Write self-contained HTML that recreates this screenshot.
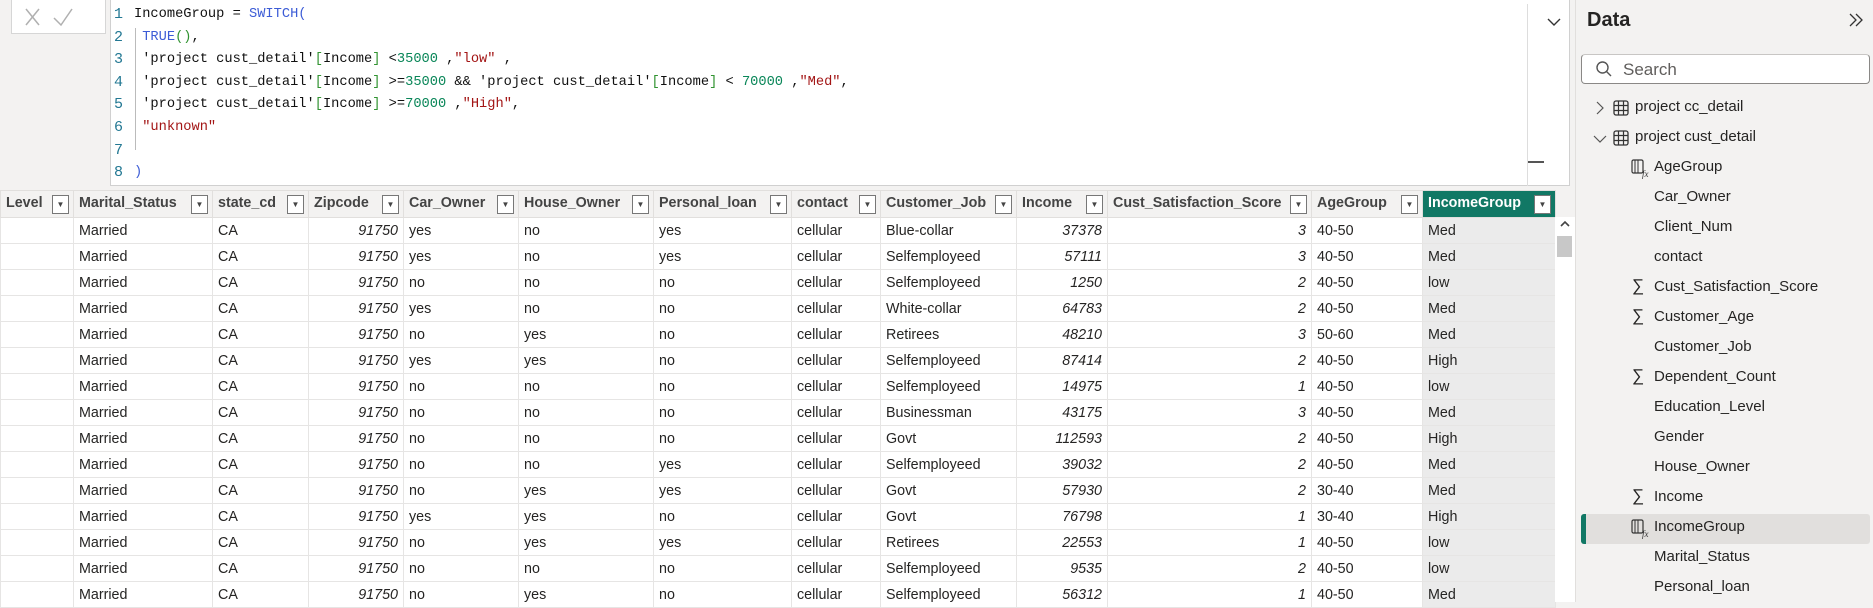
<!DOCTYPE html>
<html><head><meta charset="utf-8"><style>
*{margin:0;padding:0;box-sizing:border-box}
body{width:1873px;height:602px;overflow:hidden;background:#f3f2f1;font-family:"Liberation Sans",sans-serif;position:relative;color:#252423}
.xc{position:absolute;left:11px;top:0;width:95px;height:34px;background:#fff;border:1px solid #d6d6d6;border-top:none}
.fb{position:absolute;left:110px;top:0;width:1460px;height:186px;background:#fff;border:1px solid #d0d0d0;border-top:none}
.code{position:absolute;left:0;top:4px;font-family:"Liberation Mono",monospace;font-size:13.7px;line-height:22.6px;white-space:pre}
.ln{position:absolute;left:3px;color:#237893;font-size:15px}
.tx{position:absolute;left:23px;color:#111}
.kw{color:#3c5cd6}.fn{color:#3c5cd6}.br{color:#319331}.num{color:#098658}.str{color:#a31515}
.guide{position:absolute;left:24px;top:28px;width:1px;height:122px;background:#bbb}
.vsep{position:absolute;left:1416px;top:4px;width:1px;height:182px;background:#ddd}
table{position:absolute;left:0;top:190px;border-collapse:collapse;table-layout:fixed;font-size:14.3px}
th{height:27px;background:#f3f2f1;border:1px solid #e1dfdd;font-weight:bold;text-align:left;color:#444;padding:0 0 0 5px;white-space:nowrap;overflow:hidden}
th span.d{float:right;width:17px;height:19px;border:1px solid #777;background:#fff;margin-right:4px;font-size:8px;text-align:center;line-height:17px;color:#444}
th.sel{background:#117865;color:#fff}
td{height:26px;border:1px solid #e6e5e4;background:#fff;padding:0 5px;white-space:nowrap;overflow:hidden;color:#252423}
td.r{text-align:right;font-style:italic}
td.g{background:#ebebeb}
.sb{position:absolute;left:1555px;top:217px;width:20px;height:385px;background:#fff}
.panel{position:absolute;left:1575px;top:0;width:298px;height:602px;background:#f3f2f1;border-left:1px solid #e1dfdd}
.it{position:absolute;font-size:15px;color:#252423;white-space:nowrap}
</style></head><body>
<div class="xc">
<svg width="95" height="34" style="position:absolute;left:0;top:0"><path d="M14 9 L27 25 M27 9 L14 25" stroke="#b0b0b0" stroke-width="1.5" fill="none"/><path d="M42 18 L49 25 L60 9" stroke="#b0b0b0" stroke-width="1.5" fill="none"/></svg>
</div>
<div class="fb">
<div class="guide"></div>
<div class="code">
<div class="ln" style="top:0">1</div><div class="tx" style="top:0">IncomeGroup = <span class="kw">SWITCH(</span></div>
<div class="ln" style="top:22.6px">2</div><div class="tx" style="top:22.6px"> <span class="fn">TRUE</span><span class="br">()</span>,</div>
<div class="ln" style="top:45.2px">3</div><div class="tx" style="top:45.2px"> 'project cust_detail'<span class="br">[</span>Income<span class="br">]</span> &lt;<span class="num">35000</span> ,<span class="str">"low"</span> ,</div>
<div class="ln" style="top:67.8px">4</div><div class="tx" style="top:67.8px"> 'project cust_detail'<span class="br">[</span>Income<span class="br">]</span> &gt;=<span class="num">35000</span> &amp;&amp; 'project cust_detail'<span class="br">[</span>Income<span class="br">]</span> &lt; <span class="num">70000</span> ,<span class="str">"Med"</span>,</div>
<div class="ln" style="top:90.4px">5</div><div class="tx" style="top:90.4px"> 'project cust_detail'<span class="br">[</span>Income<span class="br">]</span> &gt;=<span class="num">70000</span> ,<span class="str">"High"</span>,</div>
<div class="ln" style="top:113px">6</div><div class="tx" style="top:113px"> <span class="str">"unknown"</span></div>
<div class="ln" style="top:135.6px">7</div>
<div class="ln" style="top:158.2px">8</div><div class="tx" style="top:158.2px"><span class="kw">)</span></div>
</div>
<div class="vsep"></div>
<svg width="14" height="10" style="position:absolute;left:1436px;top:17px"><path d="M1 2 L7 8 L13 2" stroke="#333" stroke-width="1.4" fill="none"/></svg>
<div style="position:absolute;left:1417px;top:161px;width:16px;height:2px;background:#555"></div>
</div>
<table>
<colgroup><col style="width:73px"><col style="width:139px"><col style="width:96px"><col style="width:95px"><col style="width:115px"><col style="width:135px"><col style="width:138px"><col style="width:89px"><col style="width:136px"><col style="width:91px"><col style="width:204px"><col style="width:111px"><col style="width:133px"></colgroup>
<tr><th>Level<span class="d">▼</span></th><th>Marital_Status<span class="d">▼</span></th><th>state_cd<span class="d">▼</span></th><th>Zipcode<span class="d">▼</span></th><th>Car_Owner<span class="d">▼</span></th><th>House_Owner<span class="d">▼</span></th><th>Personal_loan<span class="d">▼</span></th><th>contact<span class="d">▼</span></th><th>Customer_Job<span class="d">▼</span></th><th>Income<span class="d">▼</span></th><th>Cust_Satisfaction_Score<span class="d">▼</span></th><th>AgeGroup<span class="d">▼</span></th><th class="sel">IncomeGroup<span class="d">▼</span></th></tr>
<tr><td></td><td>Married</td><td>CA</td><td class="r">91750</td><td>yes</td><td>no</td><td>yes</td><td>cellular</td><td>Blue-collar</td><td class="r">37378</td><td class="r">3</td><td>40-50</td><td class="g">Med</td></tr>
<tr><td></td><td>Married</td><td>CA</td><td class="r">91750</td><td>yes</td><td>no</td><td>yes</td><td>cellular</td><td>Selfemployeed</td><td class="r">57111</td><td class="r">3</td><td>40-50</td><td class="g">Med</td></tr>
<tr><td></td><td>Married</td><td>CA</td><td class="r">91750</td><td>no</td><td>no</td><td>no</td><td>cellular</td><td>Selfemployeed</td><td class="r">1250</td><td class="r">2</td><td>40-50</td><td class="g">low</td></tr>
<tr><td></td><td>Married</td><td>CA</td><td class="r">91750</td><td>yes</td><td>no</td><td>no</td><td>cellular</td><td>White-collar</td><td class="r">64783</td><td class="r">2</td><td>40-50</td><td class="g">Med</td></tr>
<tr><td></td><td>Married</td><td>CA</td><td class="r">91750</td><td>no</td><td>yes</td><td>no</td><td>cellular</td><td>Retirees</td><td class="r">48210</td><td class="r">3</td><td>50-60</td><td class="g">Med</td></tr>
<tr><td></td><td>Married</td><td>CA</td><td class="r">91750</td><td>yes</td><td>yes</td><td>no</td><td>cellular</td><td>Selfemployeed</td><td class="r">87414</td><td class="r">2</td><td>40-50</td><td class="g">High</td></tr>
<tr><td></td><td>Married</td><td>CA</td><td class="r">91750</td><td>no</td><td>no</td><td>no</td><td>cellular</td><td>Selfemployeed</td><td class="r">14975</td><td class="r">1</td><td>40-50</td><td class="g">low</td></tr>
<tr><td></td><td>Married</td><td>CA</td><td class="r">91750</td><td>no</td><td>no</td><td>no</td><td>cellular</td><td>Businessman</td><td class="r">43175</td><td class="r">3</td><td>40-50</td><td class="g">Med</td></tr>
<tr><td></td><td>Married</td><td>CA</td><td class="r">91750</td><td>no</td><td>no</td><td>no</td><td>cellular</td><td>Govt</td><td class="r">112593</td><td class="r">2</td><td>40-50</td><td class="g">High</td></tr>
<tr><td></td><td>Married</td><td>CA</td><td class="r">91750</td><td>no</td><td>no</td><td>yes</td><td>cellular</td><td>Selfemployeed</td><td class="r">39032</td><td class="r">2</td><td>40-50</td><td class="g">Med</td></tr>
<tr><td></td><td>Married</td><td>CA</td><td class="r">91750</td><td>no</td><td>yes</td><td>yes</td><td>cellular</td><td>Govt</td><td class="r">57930</td><td class="r">2</td><td>30-40</td><td class="g">Med</td></tr>
<tr><td></td><td>Married</td><td>CA</td><td class="r">91750</td><td>yes</td><td>yes</td><td>no</td><td>cellular</td><td>Govt</td><td class="r">76798</td><td class="r">1</td><td>30-40</td><td class="g">High</td></tr>
<tr><td></td><td>Married</td><td>CA</td><td class="r">91750</td><td>no</td><td>yes</td><td>yes</td><td>cellular</td><td>Retirees</td><td class="r">22553</td><td class="r">1</td><td>40-50</td><td class="g">low</td></tr>
<tr><td></td><td>Married</td><td>CA</td><td class="r">91750</td><td>no</td><td>no</td><td>no</td><td>cellular</td><td>Selfemployeed</td><td class="r">9535</td><td class="r">2</td><td>40-50</td><td class="g">low</td></tr>
<tr><td></td><td>Married</td><td>CA</td><td class="r">91750</td><td>no</td><td>yes</td><td>no</td><td>cellular</td><td>Selfemployeed</td><td class="r">56312</td><td class="r">1</td><td>40-50</td><td class="g">Med</td></tr>
</table>
<div class="sb">
<svg width="20" height="14" style="position:absolute;left:0;top:0"><path d="M6 9 L10 5 L14 9" stroke="#444" stroke-width="1.6" fill="none"/></svg>
<div style="position:absolute;left:2px;top:19px;width:15px;height:21px;background:#c8c8c8"></div>
</div>
<div class="panel">
<div style="position:absolute;left:11px;top:9px;font-size:20px;font-weight:bold;color:#252423">Data</div>
<svg width="16" height="16" style="position:absolute;left:272px;top:12px"><path d="M2 2 L8 8 L2 14 M8 2 L14 8 L8 14" stroke="#333" stroke-width="1.3" fill="none"/></svg>
<div style="position:absolute;left:5px;top:54px;width:289px;height:30px;background:#fff;border:1px solid #8a8886;border-top-color:#c8c6c4;border-radius:4px">
<svg width="18" height="18" style="position:absolute;left:13px;top:5px"><circle cx="7.5" cy="7.5" r="5.5" stroke="#555" stroke-width="1.4" fill="none"/><path d="M11.5 11.5 L16 16" stroke="#555" stroke-width="1.4"/></svg>
<div style="position:absolute;left:41px;top:5px;font-size:17px;color:#605e5c">Search</div>
</div>
<svg width="10" height="14" style="position:absolute;left:19px;top:101px"><path d="M2 1 L8 7 L2 13" stroke="#555" stroke-width="1.2" fill="none"/></svg>
<svg width="14" height="10" style="position:absolute;left:17px;top:134px"><path d="M1 2 L7 8 L13 2" stroke="#555" stroke-width="1.2" fill="none"/></svg>
<svg width="16" height="16" style="position:absolute;left:37px;top:100px"><rect x="1" y="1" width="14" height="14" rx="2" stroke="#333" stroke-width="1.3" fill="none"/><path d="M1 5.5 H15 M1 10.5 H15 M5.5 1 V15 M10.5 1 V15" stroke="#333" stroke-width="1.2"/></svg>
<svg width="16" height="16" style="position:absolute;left:37px;top:130px"><rect x="1" y="1" width="14" height="14" rx="2" stroke="#333" stroke-width="1.3" fill="none"/><path d="M1 5.5 H15 M1 10.5 H15 M5.5 1 V15 M10.5 1 V15" stroke="#333" stroke-width="1.2"/></svg>
<div class="it" style="left:59px;top:98px">project cc_detail</div>
<div class="it" style="left:59px;top:128px">project cust_detail</div>
<div style="position:absolute;left:5px;top:514px;width:289px;height:30px;background:#e1dfdd;border-radius:3px"></div>
<div style="position:absolute;left:5px;top:514px;width:5px;height:30px;background:#117865;border-radius:3px 0 0 3px"></div>
<div class="it" style="left:78px;top:158px">AgeGroup</div>
<div class="it" style="left:78px;top:188px">Car_Owner</div>
<div class="it" style="left:78px;top:218px">Client_Num</div>
<div class="it" style="left:78px;top:248px">contact</div>
<div class="it" style="left:78px;top:278px">Cust_Satisfaction_Score</div>
<div class="it" style="left:78px;top:308px">Customer_Age</div>
<div class="it" style="left:78px;top:338px">Customer_Job</div>
<div class="it" style="left:78px;top:368px">Dependent_Count</div>
<div class="it" style="left:78px;top:398px">Education_Level</div>
<div class="it" style="left:78px;top:428px">Gender</div>
<div class="it" style="left:78px;top:458px">House_Owner</div>
<div class="it" style="left:78px;top:488px">Income</div>
<div class="it" style="left:78px;top:518px">IncomeGroup</div>
<div class="it" style="left:78px;top:548px">Marital_Status</div>
<div class="it" style="left:78px;top:578px">Personal_loan</div>
<div class="it" style="left:56px;top:276px;font-size:17px">∑</div>
<div class="it" style="left:56px;top:306px;font-size:17px">∑</div>
<div class="it" style="left:56px;top:366px;font-size:17px">∑</div>
<div class="it" style="left:56px;top:486px;font-size:17px">∑</div>
<svg width="20" height="20" style="position:absolute;left:55px;top:159px"><rect x="1" y="1" width="11" height="13" rx="1.5" stroke="#333" stroke-width="1.2" fill="none"/><path d="M4 1 V14 M7 1 V14" stroke="#333" stroke-width="1"/><text x="11" y="18" font-size="9" font-style="italic" fill="#333" font-family="Liberation Serif">fx</text></svg>
<svg width="20" height="20" style="position:absolute;left:55px;top:519px"><rect x="1" y="1" width="11" height="13" rx="1.5" stroke="#333" stroke-width="1.2" fill="none"/><path d="M4 1 V14 M7 1 V14" stroke="#333" stroke-width="1"/><text x="11" y="18" font-size="9" font-style="italic" fill="#333" font-family="Liberation Serif">fx</text></svg>
</div>
</body></html>
